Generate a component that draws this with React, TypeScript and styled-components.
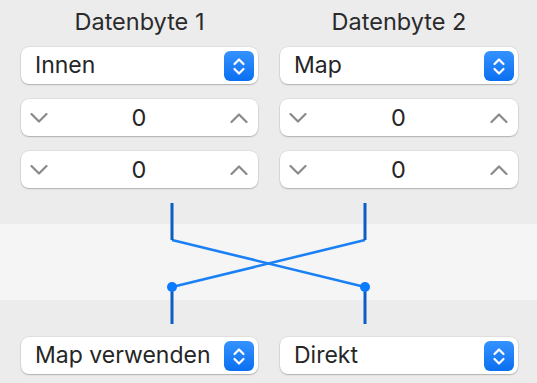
import React from "react";
import styled, { createGlobalStyle } from "styled-components";

const GlobalStyle = createGlobalStyle`
  html, body {
    margin: 0;
    padding: 0;
    background: #ececec;
  }
  body {
    font-family: Inter, "Liberation Sans", Arial, sans-serif;
    color: #262626;
  }
`;

const Page = styled.div`
  width: 537px;
  height: 383px;
  background: #ececec;
  overflow: hidden;
`;

const Columns = styled.div`
  display: grid;
  grid-template-columns: 237px 238px;
  column-gap: 22px;
  padding: 10px 0 0 21px;
`;

const Column = styled.div`
  display: flex;
  flex-direction: column;
`;

const Title = styled.div`
  height: 24px;
  line-height: 24px;
  font-size: 23.5px;
  text-align: center;
  color: #2b2b2b;
  margin-bottom: 13px;
`;

const Control = styled.div<{ $gap?: number }>`
  height: 37px;
  box-sizing: border-box;
  background: #fff;
  border-radius: 8px;
  box-shadow: 0 0 0 0.5px rgba(0, 0, 0, 0.1), 0 1px 1.5px rgba(0, 0, 0, 0.22);
  margin-bottom: ${(p) => p.$gap ?? 15}px;
  font-size: 23px;
  line-height: 37px;
`;

const Popup = styled(Control)`
  display: flex;
  align-items: center;
  justify-content: space-between;
  padding: 0 4px 0 14px;
`;

const Stepper = styled(Control)`
  display: grid;
  grid-template-columns: 18px 1fr 18px;
  align-items: center;
  padding: 0 10px 0 9px;
  text-align: center;
  font-size: 23.5px;
`;

const BlueButton = styled.div`
  width: 30px;
  height: 30px;
  border-radius: 6px;
  background: linear-gradient(#3592ff, #0a6ff0);
  display: flex;
  align-items: center;
  justify-content: center;
`;

const Connector = styled.div`
  height: 149px;
  background: linear-gradient(
    to bottom,
    #ececec 36px,
    #f5f5f5 36px,
    #f5f5f5 112px,
    #ececec 112px
  );
  svg {
    display: block;
  }
`;

const BottomRow = styled.div`
  display: grid;
  grid-template-columns: 237px 238px;
  column-gap: 22px;
  padding-left: 21px;
`;

function UpDown() {
  return (
    <svg width="30" height="30" viewBox="0 0 30 30">
      <path
        d="M10.5 13 L15 8.5 L19.5 13 M10.5 18 L15 22.5 L19.5 18"
        fill="none"
        stroke="#fff"
        strokeWidth="2.2"
        strokeLinecap="round"
        strokeLinejoin="round"
      />
    </svg>
  );
}

function Chevron(props: { up?: boolean }) {
  return (
    <svg width="18" height="10" viewBox="0 0 18 10">
      <path
        d={props.up ? "M1.5 9 L9 1.5 L16.5 9" : "M1.5 1 L9 8.5 L16.5 1"}
        fill="none"
        stroke="#8a8a8a"
        strokeWidth="2.2"
        strokeLinecap="round"
        strokeLinejoin="round"
      />
    </svg>
  );
}

function Select(props: { label: string; gap?: number }) {
  return (
    <Popup $gap={props.gap}>
      <span>{props.label}</span>
      <BlueButton>
        <UpDown />
      </BlueButton>
    </Popup>
  );
}

function NumberStepper(props: { value: number; gap?: number }) {
  return (
    <Stepper $gap={props.gap}>
      <Chevron />
      <span>{props.value}</span>
      <Chevron up />
    </Stepper>
  );
}

const columns = [
  { title: "Datenbyte 1", source: "Innen" },
  { title: "Datenbyte 2", source: "Map" },
];

export default function App() {
  return (
    <Page>
      <GlobalStyle />
      <Columns>
        {columns.map((c) => (
          <Column key={c.title}>
            <Title>{c.title}</Title>
            <Select label={c.source} />
            <NumberStepper value={0} />
            <NumberStepper value={0} gap={0} />
          </Column>
        ))}
      </Columns>
      <Connector>
        <svg width="537" height="149" viewBox="0 0 537 149">
          <g stroke="#1a80f5" strokeWidth="2.6" fill="none">
            <path d="M172 52 L365 99" />
            <path d="M365 52 L172 99" />
          </g>
          <g stroke="#0b5cc4" strokeWidth="3" fill="none">
            <path d="M172 15 V52" />
            <path d="M365 15 V52" />
            <path d="M172 99 V136" />
            <path d="M365 99 V136" />
          </g>
          <circle cx="172" cy="99" r="5" fill="#0a7aff" />
          <circle cx="365" cy="99" r="5" fill="#0a7aff" />
        </svg>
      </Connector>
      <BottomRow>
        <Select label="Map verwenden" gap={0} />
        <Select label="Direkt" gap={0} />
      </BottomRow>
    </Page>
  );
}
